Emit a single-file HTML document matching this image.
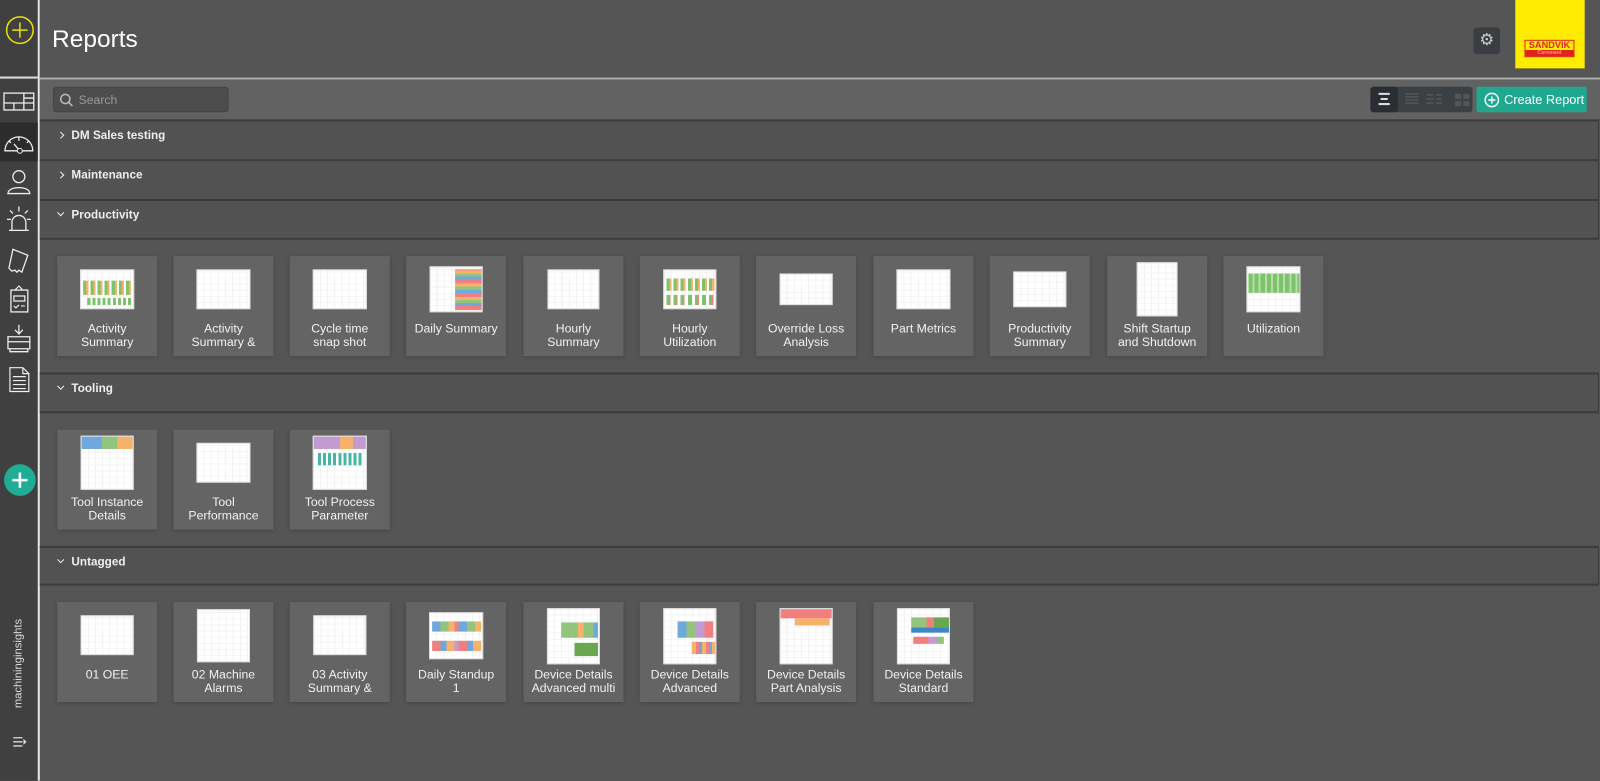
<!DOCTYPE html>
<html><head><meta charset="utf-8"><style>
*{box-sizing:border-box;margin:0;padding:0}
html,body{width:1600px;height:780px;overflow:hidden;background:#555}
#w{position:absolute;left:0;top:0;width:1568px;height:765px;transform:scale(1.020408);transform-origin:0 0;font-family:"Liberation Sans",Arial,sans-serif;color:#fff}
.side{position:absolute;left:0;top:0;width:39px;height:765px;background:#404040;border-right:2px solid #e8e8e8}
.side .top{height:77px;border-bottom:2px solid #ddd}
.ic{position:absolute;left:0;width:37px;height:40px}
.hdr{position:absolute;left:39px;top:0;right:0;height:77px;background:#555}
.hdr h1{position:absolute;left:12px;top:25px;font-weight:normal;font-size:24px;color:#fff}
.hline{position:absolute;left:39px;top:76px;right:0;height:2px;background:#aaa}
.tool{position:absolute;left:39px;top:78px;right:0;height:39px;background:#626262}
.search{position:absolute;left:13px;top:7px;width:172px;height:25px;background:#4d4d4d;border:1px solid #444;border-radius:3px;color:#999;font-size:12px;padding:5px 0 0 24px}
.sec{position:absolute;left:39px;width:1528px;height:39px;background:#525252;border-top:2px solid #3c3c3c;border-right:1px solid #3c3c3c;font-weight:bold;font-size:11.5px;color:#eee;padding:8px 0 0 31px}
.sec:before{content:"";position:absolute;left:18px;top:11px;width:4px;height:4px;border-right:1.5px solid #eee;border-bottom:1.5px solid #eee;transform:rotate(-45deg)}
.sec.o:before{transform:rotate(45deg);top:9px}
.card{position:absolute;width:98px;height:98px;background:#646464;box-shadow:0 1px 4px rgba(0,0,0,.25)}
.card .t{position:absolute;left:50%;transform:translateX(-50%);background:#fff;border:1px solid #ddd;
background-image:repeating-linear-gradient(90deg,transparent 0 6px,#f3f3f3 6px 7px),repeating-linear-gradient(0deg,transparent 0 5px,#f6f6f6 5px 6px)}
.card .l{position:absolute;left:0;right:0;top:65px;text-align:center;font-size:12px;line-height:13px;color:#f2f2f2}
.band{position:absolute}
</style></head><body><div id="w">
<div class="side"><div class="top">
<svg style="position:absolute;left:5px;top:15px" width="29" height="29"><circle cx="14.5" cy="14.5" r="13" fill="none" stroke="#e8e000" stroke-width="1.5"/><path d="M14.5 7v15M7 14.5h15" stroke="#e8e000" stroke-width="1.5"/></svg></div>
<svg class="ic" style="top:80px" viewBox="0 0 38 40"><rect x="4" y="11" width="30" height="17" fill="none" stroke="#eee" stroke-width="1.3"/><path d="M4 21h30M24 11v17M14 21v7M24 16h10" stroke="#eee" stroke-width="1.3"/></svg>
<div class="ic" style="top:120px;background:#2c2c2c;height:38px"></div>
<svg class="ic" style="top:120px" viewBox="0 0 38 40"><path d="M5 28a14 14 0 0 1 28 0z" fill="none" stroke="#eee" stroke-width="1.3"/><path d="M19 14v4M9 18l2 2M29 18l-2 2M14 21l5 6" stroke="#eee" stroke-width="1.3"/><circle cx="20" cy="28" r="2.5" fill="#2c2c2c" stroke="#eee"/></svg>
<svg class="ic" style="top:158px" viewBox="0 0 38 40"><circle cx="19" cy="15" r="6" fill="none" stroke="#eee" stroke-width="1.3"/><path d="M8 32c0-8 22-8 22 0z" fill="none" stroke="#eee" stroke-width="1.3"/></svg>
<svg class="ic" style="top:196px" viewBox="0 0 38 40"><path d="M12 30v-8a7 7 0 0 1 14 0v8M9 30h20M19 6v5M10 10l3 3M28 10l-3 3M7 19h4M27 19h4" fill="none" stroke="#eee" stroke-width="1.3"/></svg>
<svg class="ic" style="top:236px" viewBox="0 0 38 40"><path d="M13 8l15 6-6 17-3-2-2 2-2-2-3 1-3-3z" fill="none" stroke="#eee" stroke-width="1.3"/></svg>
<svg class="ic" style="top:274px" viewBox="0 0 38 40"><rect x="11" y="10" width="17" height="22" fill="none" stroke="#eee" stroke-width="1.3"/><path d="M15 10l4-4 4 4M14 16h11v5H14zM14 26l2 2 3-3M21 26h4" fill="none" stroke="#eee" stroke-width="1.2"/></svg>
<svg class="ic" style="top:312px" viewBox="0 0 38 40"><path d="M19 6v9l-4-4M19 15l4-4M8 18h22v12H8zM8 23h22M10 30v3h18v-3" fill="none" stroke="#eee" stroke-width="1.3"/></svg>
<svg class="ic" style="top:352px" viewBox="0 0 38 40"><path d="M10 8h13l6 6v18H10zM23 8v6h6M13 17h13M13 21h13M13 25h13M13 29h13" fill="none" stroke="#eee" stroke-width="1.2"/></svg>
<div style="position:absolute;left:4px;top:455px;width:31px;height:31px;border-radius:50%;background:#1fae95"><svg width="31" height="31"><path d="M15.5 8v15M8 15.5h15" stroke="#fff" stroke-width="2.5"/></svg></div>
<div style="position:absolute;left:12px;top:694px;transform:rotate(-90deg);transform-origin:0 0;font-size:11px;color:#ddd;white-space:nowrap">machininginsights</div>
<svg style="position:absolute;left:12px;top:720px" width="16" height="14"><path d="M1 3h9M1 7h9M1 11h9" stroke="#ddd" stroke-width="1.3"/><path d="M11 4l3 3-3 3z" fill="#ddd"/></svg>
</div>
<div class="hdr"><h1>Reports</h1>
<div style="position:absolute;left:1405px;top:27px;width:26px;height:26px;background:#3a3d42;border-radius:3px;color:#ccc;font-size:16px;text-align:center;line-height:26px">⚙</div>
<div style="position:absolute;left:1446px;top:0;width:68px;height:67px;background:#ffec00"><div style="position:absolute;left:9px;top:39px;width:49px;height:17px;border:1px solid #e2231a;text-align:center;font-size:9px;font-weight:bold;color:#e2231a;line-height:9px">SANDVIK<div style="background:#e2231a;color:#f99;font-size:5px;line-height:6px">Coromant</div></div></div>
</div>
<div class="hline"></div>
<div class="tool"><div class="search">Search</div>
<svg style="position:absolute;left:19px;top:13px" width="14" height="14"><circle cx="6" cy="6" r="4.5" fill="none" stroke="#bbb" stroke-width="1.5"/><path d="M9.5 9.5l3.5 3.5" stroke="#bbb" stroke-width="1.5"/></svg>
<div style="position:absolute;left:1304px;top:7px;width:100px;height:25px;background:#3d4043;border-radius:3px"></div>
<div style="position:absolute;left:1304px;top:7px;width:27px;height:25px;background:#2a2d31;border-radius:3px"><svg width="27" height="25"><path d="M8 7h11M10 12h7M8 17h11" stroke="#ddd" stroke-width="2"/></svg></div>
<svg style="position:absolute;left:1332px;top:7px" width="72" height="25"><path d="M6 7h13M6 10h13M6 13h13M6 16h13M27 8h7M36 8h6M27 12h7M36 12h6M27 16h7M36 16h6" stroke="#555" stroke-width="1.5"/><rect x="55" y="7" width="6" height="5" fill="#555"/><rect x="63" y="7" width="6" height="5" fill="#555"/><rect x="55" y="14" width="6" height="5" fill="#555"/><rect x="63" y="14" width="6" height="5" fill="#555"/></svg>
<div style="position:absolute;left:1408px;top:7px;width:108px;height:25px;background:#1fa88f;border-radius:2px;font-size:12.5px;padding:6px 0 0 27px;white-space:nowrap">Create Report</div>
<svg style="position:absolute;left:1415px;top:12px" width="16" height="16"><circle cx="8" cy="8" r="6.5" fill="none" stroke="#fff" stroke-width="1.4"/><path d="M8 4.5v7M4.5 8h7" stroke="#fff" stroke-width="1.4"/></svg>
</div>
<div class="sec" style="top:117px">DM Sales testing</div>
<div class="sec" style="top:156px">Maintenance</div>
<div class="sec o" style="top:195px">Productivity</div>
<div class="sec o" style="top:365px;height:39px">Tooling</div>
<div class="sec o" style="top:535px;height:38px">Untagged</div>
<div style="position:absolute;left:39px;top:233px;width:1528px;height:2px;background:#3c3c3c"></div>
<div style="position:absolute;left:39px;top:403px;width:1528px;height:2px;background:#3c3c3c"></div>
<div style="position:absolute;left:39px;top:572px;width:1528px;height:2px;background:#3c3c3c"></div>

<div class="card" style="left:56px;top:251px"><div class="t" style="top:13px;width:53px;height:39px"><div class="band" style="left:2px;top:10px;width:48px;height:14px;background:repeating-linear-gradient(90deg,#7cc36b 0 3px,#f6b26b 3px 5px,#fff 5px 7px)"></div><div class="band" style="left:6px;top:27px;width:44px;height:7px;background:repeating-linear-gradient(90deg,#7cc36b 0 3px,#fff 3px 5px)"></div></div><div class="l">Activity<br>Summary</div></div>
<div class="card" style="left:170px;top:251px"><div class="t" style="top:13px;width:53px;height:39px"></div><div class="l">Activity<br>Summary &amp;</div></div>
<div class="card" style="left:284px;top:251px"><div class="t" style="top:13px;width:53px;height:39px"></div><div class="l">Cycle time<br>snap shot</div></div>
<div class="card" style="left:398px;top:251px"><div class="t" style="top:10px;width:52px;height:45px"><div class="band" style="left:24px;top:2px;width:26px;height:40px;background:repeating-linear-gradient(0deg,#f08080 0 4px,#6fa8dc 4px 7px,#93c47d 7px 10px,#f6b26b 10px 13px)"></div></div><div class="l">Daily Summary</div></div>
<div class="card" style="left:513px;top:251px"><div class="t" style="top:13px;width:51px;height:39px"></div><div class="l">Hourly<br>Summary</div></div>
<div class="card" style="left:627px;top:251px"><div class="t" style="top:13px;width:52px;height:39px"><div class="band" style="left:2px;top:8px;width:48px;height:12px;background:repeating-linear-gradient(90deg,#7cc36b 0 3px,#f6b26b 3px 5px,#fff 5px 7px)"></div><div class="band" style="left:2px;top:24px;width:48px;height:10px;background:repeating-linear-gradient(90deg,#7cc36b 0 3px,#f08080 3px 4px,#fff 4px 7px)"></div></div><div class="l">Hourly<br>Utilization</div></div>
<div class="card" style="left:741px;top:251px"><div class="t" style="top:17px;width:52px;height:31px"></div><div class="l">Override Loss<br>Analysis</div></div>
<div class="card" style="left:856px;top:251px"><div class="t" style="top:13px;width:53px;height:39px"></div><div class="l">Part Metrics</div></div>
<div class="card" style="left:970px;top:251px"><div class="t" style="top:15px;width:52px;height:35px"></div><div class="l">Productivity<br>Summary</div></div>
<div class="card" style="left:1085px;top:251px"><div class="t" style="top:6px;width:40px;height:53px"></div><div class="l">Shift Startup<br>and Shutdown</div></div>
<div class="card" style="left:1199px;top:251px"><div class="t" style="top:10px;width:53px;height:45px"><div class="band" style="left:1px;top:6px;width:50px;height:19px;background:repeating-linear-gradient(90deg,#7cc36b 0 4px,#b6dca9 4px 6px)"></div></div><div class="l">Utilization</div></div>

<div class="card" style="left:56px;top:421px"><div class="t" style="top:6px;width:52px;height:53px"><div class="band" style="left:0;top:0;width:50px;height:12px;background:linear-gradient(90deg,#6fa8dc 0 40%,#93c47d 40% 70%,#f6b26b 70%)"></div></div><div class="l">Tool Instance<br>Details</div></div>
<div class="card" style="left:170px;top:421px"><div class="t" style="top:13px;width:53px;height:39px"></div><div class="l">Tool<br>Performance</div></div>
<div class="card" style="left:284px;top:421px"><div class="t" style="top:6px;width:53px;height:53px"><div class="band" style="left:0;top:0;width:51px;height:12px;background:linear-gradient(90deg,#c39bd3 0 50%,#f6b26b 50% 75%,#c39bd3 75%)"></div><div class="band" style="left:4px;top:16px;width:44px;height:12px;background:repeating-linear-gradient(90deg,#45b6a5 0 3px,#fff 3px 5px)"></div></div><div class="l">Tool Process<br>Parameter</div></div>

<div class="card" style="left:56px;top:590px"><div class="t" style="top:13px;width:52px;height:39px"></div><div class="l">01 OEE</div></div>
<div class="card" style="left:170px;top:590px"><div class="t" style="top:7px;width:52px;height:52px"></div><div class="l">02 Machine<br>Alarms</div></div>
<div class="card" style="left:284px;top:590px"><div class="t" style="top:13px;width:52px;height:39px"></div><div class="l">03 Activity<br>Summary &amp;</div></div>
<div class="card" style="left:398px;top:590px"><div class="t" style="top:10px;width:53px;height:46px"><div class="band" style="left:2px;top:8px;width:48px;height:10px;background:repeating-linear-gradient(90deg,#6fa8dc 0 8px,#93c47d 8px 16px,#f6b26b 16px 22px,#f08080 22px 26px)"></div><div class="band" style="left:2px;top:27px;width:48px;height:10px;background:repeating-linear-gradient(90deg,#f08080 0 8px,#6fa8dc 8px 14px,#f6b26b 14px 22px,#c39bd3 22px 26px)"></div></div><div class="l">Daily Standup<br>1</div></div>
<div class="card" style="left:513px;top:590px"><div class="t" style="top:6px;width:52px;height:55px"><div class="band" style="left:13px;top:13px;width:36px;height:15px;background:linear-gradient(90deg,#93c47d 0 45%,#f6b26b 45% 60%,#93c47d 60% 88%,#6fa8dc 88%)"></div><div class="band" style="left:26px;top:33px;width:23px;height:13px;background:#6aa84f"></div></div><div class="l">Device Details<br>Advanced multi</div></div>
<div class="card" style="left:627px;top:590px"><div class="t" style="top:6px;width:52px;height:55px"><div class="band" style="left:13px;top:12px;width:35px;height:16px;background:linear-gradient(90deg,#6fa8dc 0 25%,#93c47d 25% 50%,#c39bd3 50% 75%,#f08080 75%)"></div><div class="band" style="left:27px;top:32px;width:23px;height:12px;background:repeating-linear-gradient(90deg,#f6b26b 0 4px,#f08080 4px 7px,#6fa8dc 7px 10px)"></div></div><div class="l">Device Details<br>Advanced</div></div>
<div class="card" style="left:741px;top:590px"><div class="t" style="top:6px;width:52px;height:55px"><div class="band" style="left:0;top:0;width:50px;height:9px;background:#f08080"></div><div class="band" style="left:14px;top:9px;width:34px;height:7px;background:#f6b26b"></div></div><div class="l">Device Details<br>Part Analysis</div></div>
<div class="card" style="left:856px;top:590px"><div class="t" style="top:6px;width:52px;height:55px"><div class="band" style="left:13px;top:8px;width:37px;height:10px;background:linear-gradient(90deg,#93c47d 0 40%,#f08080 40% 60%,#6aa84f 60%)"></div><div class="band" style="left:13px;top:18px;width:37px;height:5px;background:#3d85c6"></div><div class="band" style="left:15px;top:27px;width:30px;height:7px;background:linear-gradient(90deg,#f08080 0 50%,#c39bd3 50% 80%,#93c47d 80%)"></div></div><div class="l">Device Details<br>Standard</div></div>
</div></body></html>
